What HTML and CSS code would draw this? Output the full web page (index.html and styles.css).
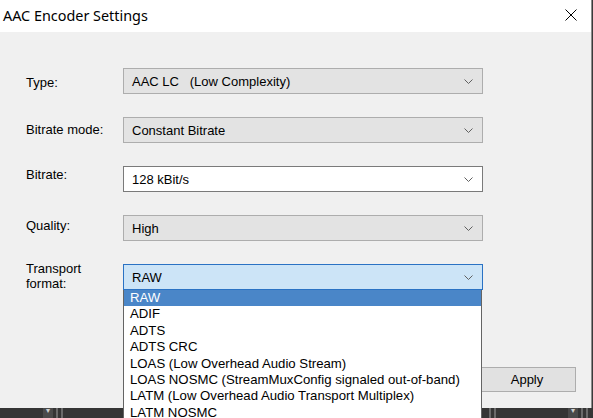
FILE: index.html
```html
<!DOCTYPE html>
<html>
<head>
<meta charset="utf-8">
<link rel="stylesheet" href="styles.css">
</head>
<body>
<div class="screen">
  <div class="window">
    <div class="titlebar">
      <span class="title">AAC Encoder Settings</span>
      <svg class="close" width="12" height="12" viewBox="0 0 12 12"><path d="M0.5 0.5 L11.5 11.5 M11.5 0.5 L0.5 11.5" stroke="#000" stroke-width="1" fill="none"/></svg>
    </div>
    <div class="content">
      <div class="form">
        <div class="row">
          <span class="label l-type">Type:</span>
          <div class="combo"><span class="val">AAC LC   (Low Complexity)</span><svg class="chev" width="9" height="5" viewBox="0 0 9 5"><path d="M0.5 0.5 L4.5 4.5 L8.5 0.5" stroke="#606060" fill="none"/></svg></div>
        </div>
        <div class="row">
          <span class="label l-mode">Bitrate mode:</span>
          <div class="combo"><span class="val">Constant Bitrate</span><svg class="chev" width="9" height="5" viewBox="0 0 9 5"><path d="M0.5 0.5 L4.5 4.5 L8.5 0.5" stroke="#606060" fill="none"/></svg></div>
        </div>
        <div class="row">
          <span class="label l-rate">Bitrate:</span>
          <div class="combo edit"><span class="val">128 kBit/s</span><svg class="chev" width="9" height="5" viewBox="0 0 9 5"><path d="M0.5 0.5 L4.5 4.5 L8.5 0.5" stroke="#606060" fill="none"/></svg></div>
        </div>
        <div class="row">
          <span class="label l-qual">Quality:</span>
          <div class="combo"><span class="val">High</span><svg class="chev" width="9" height="5" viewBox="0 0 9 5"><path d="M0.5 0.5 L4.5 4.5 L8.5 0.5" stroke="#606060" fill="none"/></svg></div>
        </div>
        <div class="row">
          <span class="label l-trans">Transport<br>format:</span>
          <div class="combo-wrap">
            <div class="combo focus"><span class="val">RAW</span><svg class="chev" width="9" height="5" viewBox="0 0 9 5"><path d="M0.5 0.5 L4.5 4.5 L8.5 0.5" stroke="#606060" fill="none"/></svg></div>
            <ul class="list">
              <li class="sel">RAW</li>
              <li>ADIF</li>
              <li>ADTS</li>
              <li>ADTS CRC</li>
              <li>LOAS (Low Overhead Audio Stream)</li>
              <li>LOAS NOSMC (StreamMuxConfig signaled out-of-band)</li>
              <li>LATM (Low Overhead Audio Transport Multiplex)</li>
              <li>LATM NOSMC</li>
            </ul>
          </div>
        </div>
      </div>
      <div class="actions">
        <button class="btn">Apply</button>
      </div>
    </div>
  </div>
  <div class="strip">
    <div class="strip-left"><span class="drop">&#9662;</span><span class="bar"></span><span class="bar"></span></div>
    <div class="strip-right"><span class="bar"></span><span class="bar"></span><span class="gapfill"></span><span class="drop">&#9662;</span><span class="bar"></span><span class="bar"></span></div>
  </div>
</div>
</body>
</html>
```

FILE: styles.css
```css
html, body {
  margin: 0;
  padding: 0;
}
body {
  width: 593px;
  height: 418px;
  overflow: hidden;
  background: #3a3a3a;
  font-family: "Liberation Sans", Arial, sans-serif;
  font-size: 13px;
  color: #000;
}
.screen {
  width: 593px;
  height: 418px;
  display: flex;
  flex-direction: column;
  position: relative;
}
.window {
  width: 591px;
  height: 408px;
  border-right: 1px solid #8c8c8c;
  background: #f0f0f0;
  display: flex;
  flex-direction: column;
  flex: none;
}
.titlebar {
  height: 32px;
  background: #fff;
  display: flex;
  align-items: center;
  justify-content: space-between;
  padding: 0 14px 0 3px;
  flex: none;
}
.title {
  font-family: "Noto Sans", "Open Sans", sans-serif;
  font-size: 14.4px;
  color: #000;
  margin-top: -1px;
}
.close {
  margin-top: -2px;
}
.content {
  flex: 1;
  display: flex;
  flex-direction: column;
  padding: 36px 15px 16px 26px;
}
.form {
  display: flex;
  flex-direction: column;
  gap: 23px;
}
.row {
  display: flex;
  align-items: flex-start;
  height: 26px;
}
.label {
  width: 97px;
  flex: none;
  line-height: 15px;
}
.l-type { margin-top: 7px; }
.l-mode { margin-top: 5px; }
.l-rate { margin-top: 1px; }
.l-qual { margin-top: 3px; }
.l-trans { margin-top: -3px; }
.combo {
  box-sizing: border-box;
  width: 360px;
  height: 26px;
  background: #e3e3e3;
  border: 1px solid #adadad;
  display: flex;
  align-items: center;
  justify-content: space-between;
  padding: 0 9px 0 8px;
}
.combo .val {
  white-space: pre;
  line-height: 15px;
}
.combo.edit {
  background: #fff;
  border-color: #7a7a7a;
}
.combo.focus {
  background: #cce4f7;
  border-color: #2a72c4;
}
.combo-wrap {
  position: relative;
  width: 360px;
}
.list {
  position: absolute;
  top: 26px;
  left: 0;
  width: 359px;
  box-sizing: border-box;
  margin: 0;
  padding: 0;
  list-style: none;
  background: #fff;
  border: 1px solid #646464;
  border-top: none;
  z-index: 2;
  font-size: 13.2px;
}
.list li {
  height: 16.4px;
  line-height: 16px;
  padding-left: 6px;
  white-space: nowrap;
}
.list li.sel {
  background: #4a86c8;
  color: #fff;
}
.actions {
  margin-top: auto;
  display: flex;
  justify-content: flex-end;
}
.btn {
  width: 98px;
  height: 25px;
  background: #e1e1e1;
  border: 1px solid #adadad;
  font-family: "Liberation Sans", Arial, sans-serif;
  font-size: 13px;
  color: #000;
  padding: 0;
}
.strip {
  flex: 1;
  display: flex;
  justify-content: space-between;
  background: #353535;
}
.strip-left, .strip-right {
  display: flex;
  align-items: stretch;
  gap: 3px;
}
.strip-left {
  padding-left: 43px;
}
.strip-right {
  padding-right: 5px;
}
.drop {
  width: 10px;
  background: #4a4a4a;
  color: #cfcfcf;
  font-size: 8px;
  line-height: 6px;
  text-align: center;
}
.bar {
  width: 2px;
  background: #6a6a6a;
}
.gapfill {
  width: 66px;
}
```
